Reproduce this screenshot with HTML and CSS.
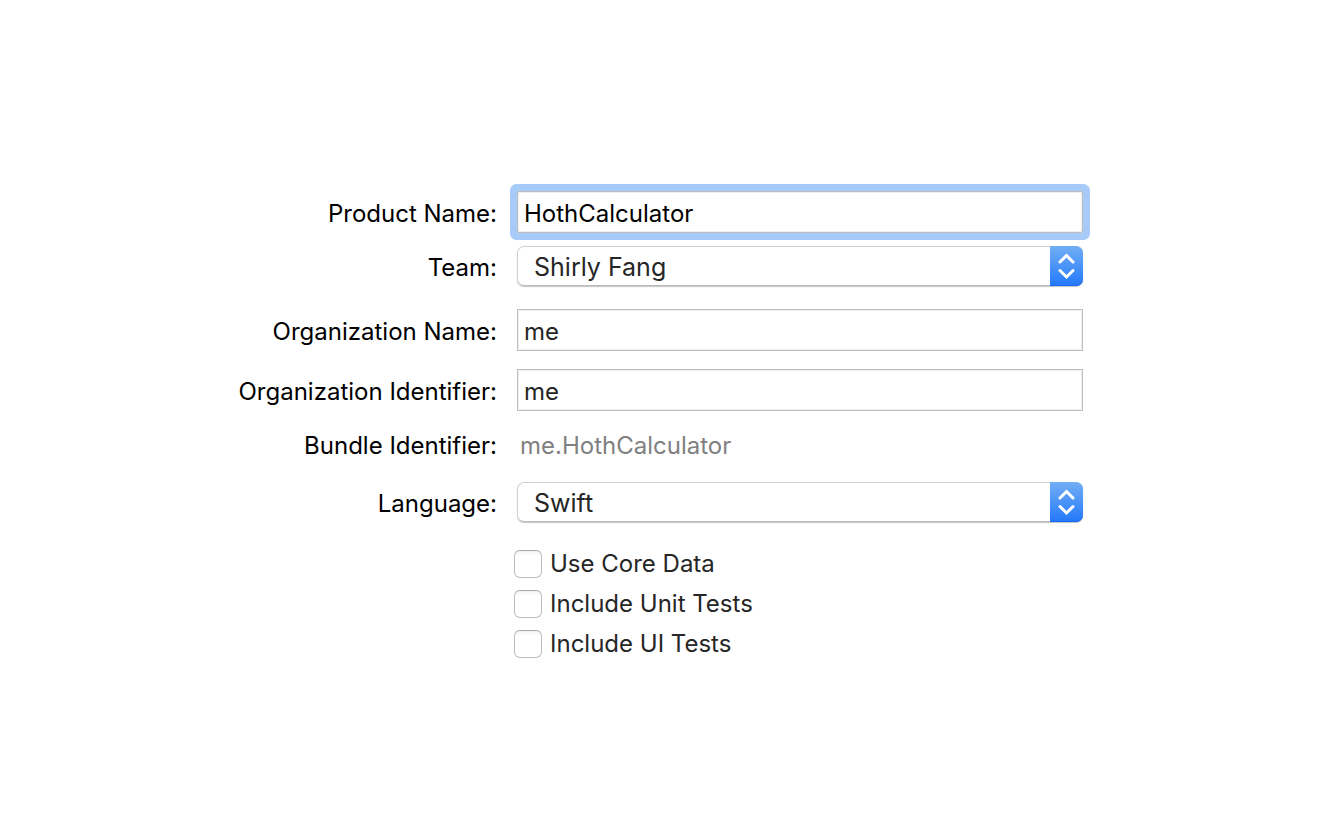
FILE: index.html
```html
<!DOCTYPE html>
<html lang="en">
<head>
<meta charset="utf-8">
<title>New Project Options</title>
<link rel="stylesheet" href="styles.css">
</head>
<body>
<form class="options">
  <div class="row">
    <label class="label" for="product">Product Name:</label>
    <input class="field field-active" id="product" type="text" value="HothCalculator">
  </div>
  <div class="row row-tight">
    <label class="label" for="team">Team:</label>
    <div class="popup">
      <select class="popup-select" id="team"><option>Shirly Fang</option></select>
      <span class="popup-cap"><svg class="arrows" viewBox="0 0 33 40" aria-hidden="true"><path d="M10 16 16.500 9.500 23 16M10 24.500 16.500 31 23 24.500"/></svg></span>
    </div>
  </div>
  <div class="row row-loose">
    <label class="label" for="org">Organization Name:</label>
    <input class="field" id="org" type="text" value="me">
  </div>
  <div class="row">
    <label class="label" for="orgid">Organization Identifier:</label>
    <input class="field" id="orgid" type="text" value="me">
  </div>
  <div class="row">
    <label class="label" for="bundle">Bundle Identifier:</label>
    <output class="bundle" id="bundle">me.HothCalculator</output>
  </div>
  <div class="row row-loose">
    <label class="label" for="language">Language:</label>
    <div class="popup">
      <select class="popup-select" id="language"><option>Swift</option></select>
      <span class="popup-cap"><svg class="arrows" viewBox="0 0 33 40" aria-hidden="true"><path d="M10 16 16.500 9.500 23 16M10 24.500 16.500 31 23 24.500"/></svg></span>
    </div>
  </div>
  <div class="row row-checks">
    <div class="checks">
      <label class="check"><input class="box" type="checkbox">Use Core Data</label>
      <label class="check"><input class="box" type="checkbox">Include Unit Tests</label>
      <label class="check"><input class="box" type="checkbox">Include UI Tests</label>
    </div>
  </div>
</form>
</body>
</html>
```
FILE: styles.css
```css
* { box-sizing: border-box; }
body {
  margin: 0;
  background: #fff;
  color: #262626;
  font: 24px/28px Inter, "Liberation Sans", sans-serif;
}
.options { padding: 191px 0 40px; }
.row {
  display: grid;
  grid-template-columns: 497fr 566fr 241fr;
  column-gap: 20px;
  align-items: center;
  margin-top: 18px;
}
.row:first-child { margin-top: 0; }
.row-tight { margin-top: 13px; }
.row-loose { margin-top: 23px; }
.row-checks { margin-top: 28px; }
.label,
.bundle {
  padding-top: 4px;
  line-height: 26px;
  white-space: nowrap;
}
.label { text-align: right; color: #000; }
.bundle { padding-left: 3px; color: #808080; }
.field {
  width: 100%;
  height: 42px;
  padding: 2px 6px 0;
  border: 1px solid #bdbdbd;
  border-radius: 0;
  outline: none;
  background: #fff;
  box-shadow: inset 0 0 0 1px #efefef;
  color: #262626;
  font: inherit;
}
.field-active {
  color: #000;
  border-radius: 2px;
  box-shadow: inset 0 0 0 1px #efefef, 0 0 0 7px #a6cbf8;
}
.popup {
  display: grid;
  grid-template-columns: 1fr 33px;
  height: 40px;
  border-radius: 7px;
  box-shadow: 0 1px 1px #c4c4c4;
}
.popup-select {
  grid-area: 1 / 1 / 2 / 3;
  width: 100%;
  height: 40px;
  padding: 2px 48px 0 16px;
  border: 1px solid #d0d0d0;
  border-bottom-color: #bbb;
  border-radius: 7px;
  background: #fff;
  color: #262626;
  font: inherit;
  font-size: 25px;
  line-height: 36px;
  appearance: none;
}
.popup-cap {
  grid-area: 1 / 2;
  height: 40px;
  border-radius: 0 7px 7px 0;
  background: linear-gradient(#72aef5, #2379fa);
  box-shadow: inset 0 -1px 0 #1768ee;
  pointer-events: none;
}
.arrows {
  display: block;
  width: 33px;
  height: 40px;
  fill: none;
  stroke: #fff;
  stroke-width: 3;
  stroke-linecap: round;
  stroke-linejoin: miter;
}
.checks {
  grid-column: 2;
  display: grid;
  gap: 12px;
  justify-items: start;
  margin-left: -3px;
}
.check { display: flex; align-items: center; gap: 8px; }
.box {
  appearance: none;
  width: 28px;
  height: 28px;
  margin: 0;
  border: 1px solid #bcbcbc;
  border-top-color: #a8a8a8;
  border-radius: 6px;
  background: linear-gradient(#f3f3f3, #fff 5px);
}
```
